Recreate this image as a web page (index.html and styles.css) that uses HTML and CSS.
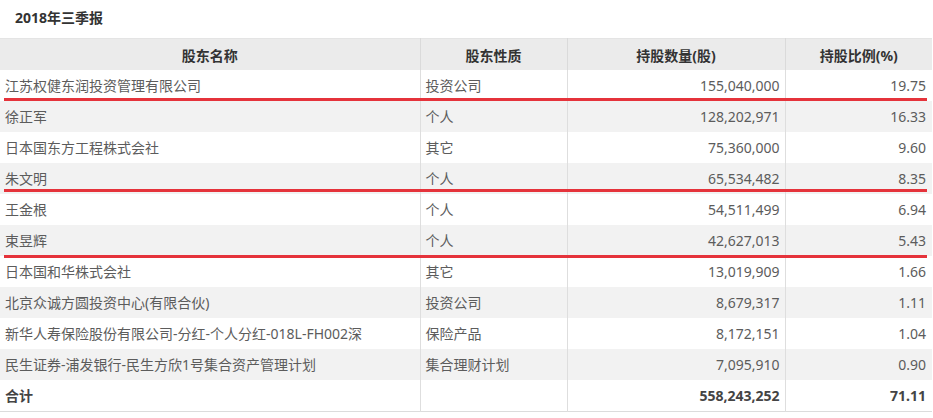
FILE: index.html
```html
<!DOCTYPE html>
<html lang="zh-CN">
<head>
<meta charset="utf-8">
<link rel="stylesheet" href="styles.css">
</head>
<body>
<div class="title">2018年三季报</div>
<div class="wrap">
<table class="holders">
<colgroup>
<col class="c1"><col class="c2"><col class="c3"><col class="c4">
</colgroup>
<thead>
<tr><th>股东名称</th><th>股东性质</th><th>持股数量(股)</th><th>持股比例(%)</th></tr>
</thead>
<tbody>
<tr><td>江苏权健东润投资管理有限公司</td><td>投资公司</td><td class="num">155,040,000</td><td class="num">19.75</td></tr>
<tr><td>徐正军</td><td>个人</td><td class="num">128,202,971</td><td class="num">16.33</td></tr>
<tr><td>日本国东方工程株式会社</td><td>其它</td><td class="num">75,360,000</td><td class="num">9.60</td></tr>
<tr><td>朱文明</td><td>个人</td><td class="num">65,534,482</td><td class="num">8.35</td></tr>
<tr><td>王金根</td><td>个人</td><td class="num">54,511,499</td><td class="num">6.94</td></tr>
<tr><td>束昱辉</td><td>个人</td><td class="num">42,627,013</td><td class="num">5.43</td></tr>
<tr><td>日本国和华株式会社</td><td>其它</td><td class="num">13,019,909</td><td class="num">1.66</td></tr>
<tr><td>北京众诚方圆投资中心(有限合伙)</td><td>投资公司</td><td class="num">8,679,317</td><td class="num">1.11</td></tr>
<tr><td>新华人寿保险股份有限公司-分红-个人分红-018L-FH002深</td><td>保险产品</td><td class="num">8,172,151</td><td class="num">1.04</td></tr>
<tr><td>民生证券-浦发银行-民生方欣1号集合资产管理计划</td><td>集合理财计划</td><td class="num">7,095,910</td><td class="num">0.90</td></tr>
<tr class="total"><td>合计</td><td></td><td class="num">558,243,252</td><td class="num">71.11</td></tr>
</tbody>
</table>
<div class="mark m1"></div>
<div class="mark m2"></div>
<div class="mark m3"></div>
</div>
</body>
</html>
```

FILE: styles.css
```css
html, body {
  margin: 0;
  padding: 0;
  background: #fff;
}
body {
  font-family: "Noto Sans", "Noto Sans CJK SC", sans-serif;
  font-size: 14px;
  color: #5c5c5c;
}
.title {
  height: 38px;
  line-height: 36px;
  padding-left: 15px;
  font-weight: bold;
  color: #333;
  font-size: 14px;
}
.wrap {
  position: relative;
  width: 932px;
}
.holders {
  width: 932px;
  border-collapse: collapse;
  table-layout: fixed;
  border-top: 1px solid #e4e4e4;
  border-bottom: 1px solid #dcdcdc;
}
.c1 { width: 420px; }
.c2 { width: 147px; }
.c3 { width: 218px; }
.c4 { width: 147px; }
.holders th {
  height: 31px;
  padding: 0;
  background: #ebebeb;
  color: #333;
  font-weight: bold;
  text-align: center;
  border-left: 1px solid #dadada;
}
.holders td {
  height: 31px;
  padding: 0 5px;
  white-space: nowrap;
  overflow: hidden;
  border-left: 1px solid #dedede;
  line-height: 20px;
}
.holders th:first-child,
.holders td:first-child {
  border-left: none;
}
.holders tbody tr:nth-child(even) td {
  background: #f2f2f2;
}
.holders td.num {
  text-align: right;
}
.holders td:last-child {
  padding-right: 6px;
}
.total td {
  font-weight: bold;
  color: #444;
}
.mark {
  position: absolute;
  left: 4px;
  width: 923px;
  height: 3px;
  background: #e5333b;
}
.m1 { top: 60px; }
.m2 { top: 151px; }
.m3 { top: 217px; }
```
